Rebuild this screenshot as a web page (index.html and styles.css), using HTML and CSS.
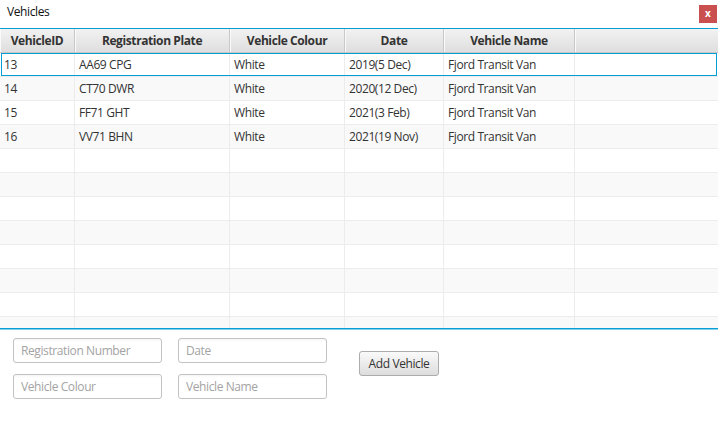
FILE: index.html
```html
<!DOCTYPE html>
<html>
<head>
<meta charset="utf-8">
<link rel="stylesheet" href="styles.css">
</head>
<body>
<div class="window">
  <div class="titlebar">
    <span class="title">Vehicles</span>
    <span class="close">x</span>
  </div>
  <div class="table">
    <div class="row header">
      <div class="c c1">VehicleID</div>
      <div class="c c2">Registration Plate</div>
      <div class="c c3">Vehicle Colour</div>
      <div class="c c4">Date</div>
      <div class="c c5">Vehicle Name</div>
      <div class="c cf"></div>
    </div>
    <div class="body">
      <div class="row focused">
        <div class="c c1">13</div><div class="c c2">AA69 CPG</div><div class="c c3">White</div><div class="c c4">2019(5 Dec)</div><div class="c c5">Fjord Transit Van</div><div class="c cf"></div>
      </div>
      <div class="row">
        <div class="c c1">14</div><div class="c c2">CT70 DWR</div><div class="c c3">White</div><div class="c c4">2020(12 Dec)</div><div class="c c5">Fjord Transit Van</div><div class="c cf"></div>
      </div>
      <div class="row">
        <div class="c c1">15</div><div class="c c2">FF71 GHT</div><div class="c c3">White</div><div class="c c4">2021(3 Feb)</div><div class="c c5">Fjord Transit Van</div><div class="c cf"></div>
      </div>
      <div class="row">
        <div class="c c1">16</div><div class="c c2">VV71 BHN</div><div class="c c3">White</div><div class="c c4">2021(19 Nov)</div><div class="c c5">Fjord Transit Van</div><div class="c cf"></div>
      </div>
      <div class="row"><div class="c c1"></div><div class="c c2"></div><div class="c c3"></div><div class="c c4"></div><div class="c c5"></div><div class="c cf"></div></div>
      <div class="row"><div class="c c1"></div><div class="c c2"></div><div class="c c3"></div><div class="c c4"></div><div class="c c5"></div><div class="c cf"></div></div>
      <div class="row"><div class="c c1"></div><div class="c c2"></div><div class="c c3"></div><div class="c c4"></div><div class="c c5"></div><div class="c cf"></div></div>
      <div class="row"><div class="c c1"></div><div class="c c2"></div><div class="c c3"></div><div class="c c4"></div><div class="c c5"></div><div class="c cf"></div></div>
      <div class="row"><div class="c c1"></div><div class="c c2"></div><div class="c c3"></div><div class="c c4"></div><div class="c c5"></div><div class="c cf"></div></div>
      <div class="row"><div class="c c1"></div><div class="c c2"></div><div class="c c3"></div><div class="c c4"></div><div class="c c5"></div><div class="c cf"></div></div>
      <div class="row"><div class="c c1"></div><div class="c c2"></div><div class="c c3"></div><div class="c c4"></div><div class="c c5"></div><div class="c cf"></div></div>
      <div class="row"><div class="c c1"></div><div class="c c2"></div><div class="c c3"></div><div class="c c4"></div><div class="c c5"></div><div class="c cf"></div></div>
    </div>
  </div>
  <div class="form">
    <div class="fields">
      <input class="field" type="text" placeholder="Registration Number">
      <input class="field" type="text" placeholder="Date">
      <input class="field" type="text" placeholder="Vehicle Colour">
      <input class="field" type="text" placeholder="Vehicle Name">
    </div>
    <button class="btn">Add Vehicle</button>
  </div>
</div>
</body>
</html>
```
FILE: styles.css
```css
html, body {
  margin: 0;
  padding: 0;
  background: #ffffff;
}
body {
  font-family: "Open Sans", "Noto Sans", sans-serif;
  font-size: 12px;
  letter-spacing: -0.4px;
  color: #333333;
}
.window {
  width: 718px;
  height: 427px;
  overflow: hidden;
}
.titlebar {
  height: 28px;
  display: flex;
  align-items: flex-start;
  justify-content: space-between;
}
.title {
  margin: 4px 0 0 7px;
  color: #111;
  line-height: 16px;
}
.close {
  margin: 5px 1px 0 0;
  width: 18px;
  height: 18px;
  background: #c9504f;
  color: #ffffff;
  font-weight: bold;
  font-size: 10px;
  letter-spacing: 0;
  line-height: 17px;
  text-align: center;
}
.table {
  height: 299px;
  border-top: 1px solid #039ed3;
  border-bottom: 1px solid #039ed3;
  box-shadow: 0 1px 0 #86d0ec;
  display: flex;
  flex-direction: column;
  overflow: hidden;
}
.row {
  display: flex;
  height: 24px;
  flex: none;
  box-sizing: border-box;
  border-bottom: 1px solid #ececec;
  position: relative;
  background: #ffffff;
}
.body {
  flex: 1;
  overflow: hidden;
}
.body .row:nth-child(even) {
  background: #f9f9f9;
}
.c {
  box-sizing: border-box;
  border-right: 1px solid #ececec;
  padding: 0 4px;
  line-height: 23px;
  white-space: nowrap;
  overflow: hidden;
}
.c1 { width: 75px; }
.c2 { width: 155px; }
.c3 { width: 115px; }
.c4 { width: 99px; }
.c5 { width: 131px; }
.cf { flex: 1; border-right: none; }
.header {
  height: 24px;
  border-bottom: 1px solid #c8c8c8;
  background: linear-gradient(to bottom, #f2f2f2, #dedede);
}
.header .c {
  font-weight: bold;
  text-align: center;
  border-right: 1px solid #c8c8c8;
  box-shadow: inset 1px 0 0 #fafafa;
  color: #333;
}
.header .cf { border-right: none; }
.focused::after {
  content: "";
  position: absolute;
  left: 1px;
  right: 1px;
  top: 0;
  bottom: 0;
  border: 1px solid #039ed3;
  pointer-events: none;
}
.form {
  display: flex;
  align-items: flex-start;
  padding: 9px 0 0 13px;
}
.fields {
  display: grid;
  grid-template-columns: 149px 149px;
  column-gap: 16px;
  row-gap: 11px;
}
.field {
  box-sizing: border-box;
  width: 149px;
  height: 25px;
  margin: 0;
  border: 1px solid #c2c2c2;
  border-radius: 3px;
  padding: 0 7px;
  font-family: "Open Sans", "Noto Sans", sans-serif;
  font-size: 12px;
  letter-spacing: -0.4px;
  color: #333;
  background: linear-gradient(to bottom, #f6f6f6 0px, #ffffff 3px);
  outline: none;
}
.field::placeholder {
  color: #a3a3a3;
}
.btn {
  margin: 13px 0 0 32px;
  box-sizing: border-box;
  width: 80px;
  height: 25px;
  padding: 0;
  border: 1px solid #acacac;
  border-radius: 3px;
  background: linear-gradient(to bottom, #fafafa, #dddddd);
  font-family: "Open Sans", "Noto Sans", sans-serif;
  font-size: 12px;
  letter-spacing: -0.4px;
  color: #333;
}
```
